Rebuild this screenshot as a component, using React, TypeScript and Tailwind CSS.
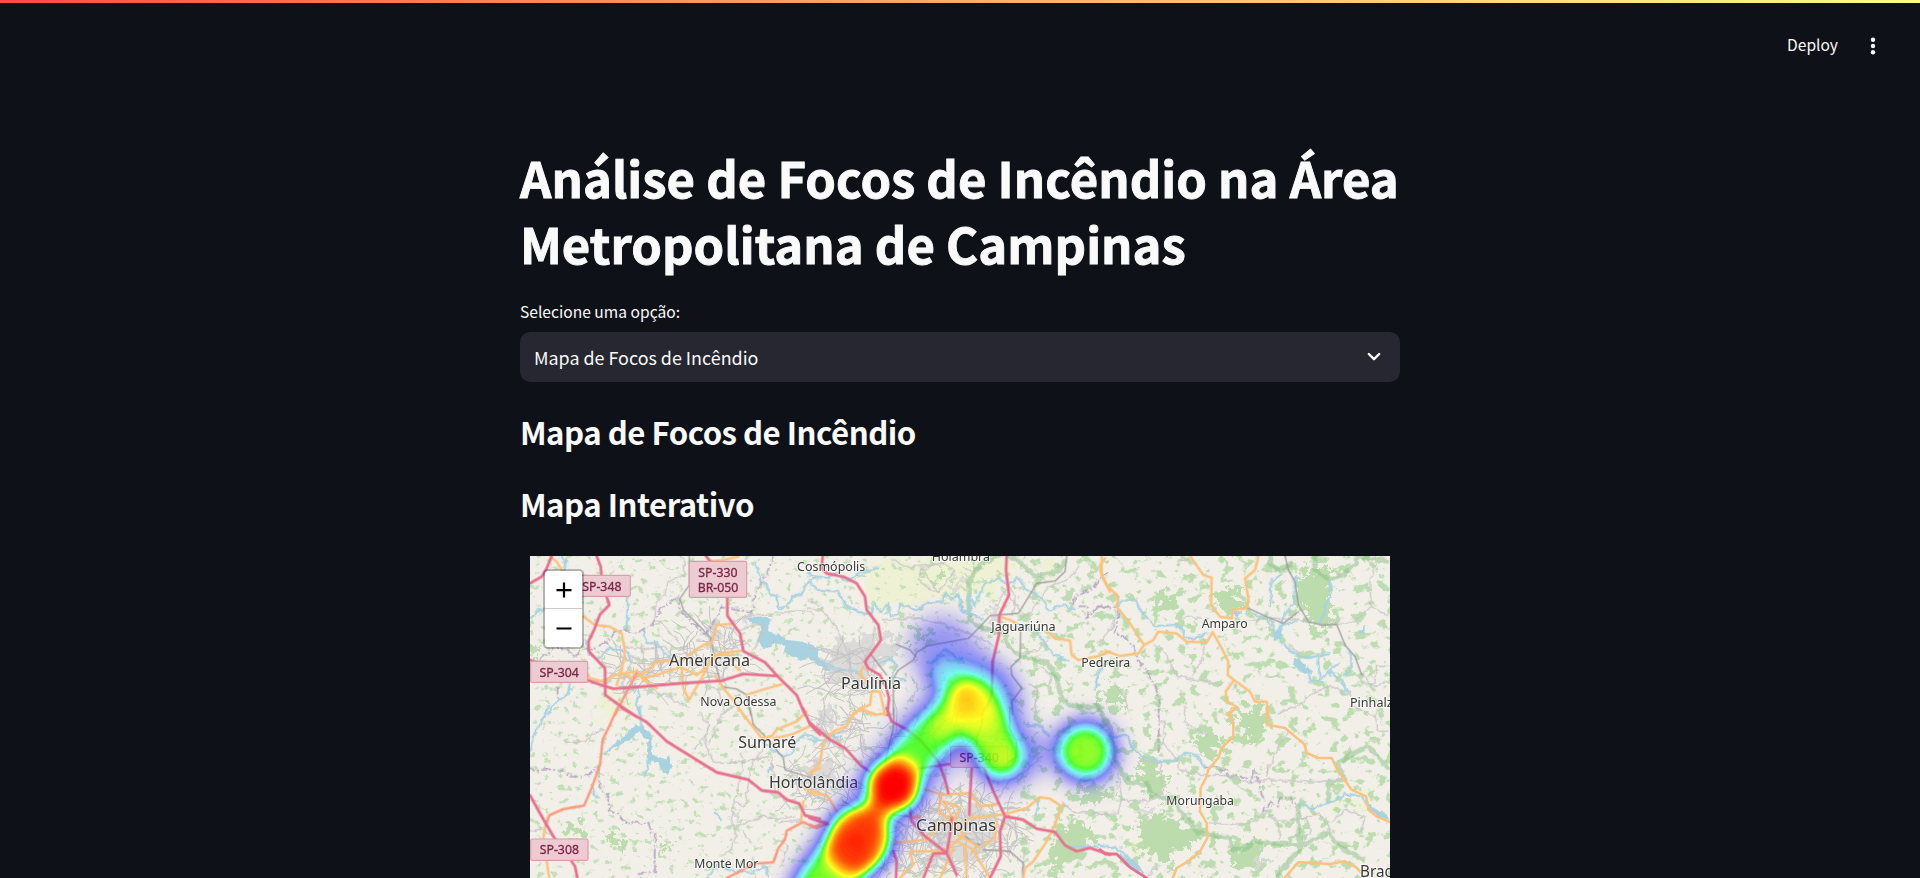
import React from "react";

const UI_FONT = "font-['Source_Sans_Pro','Noto_Sans_CJK_SC','Noto_Sans',sans-serif]";

type Kind = "trunk" | "primary" | "secondary" | "minor" | "rail" | "river" | "border" | "park";

const STYLES: Record<Kind, { stroke: string; width: number; dash?: string; opacity?: number }> = {
  trunk: { stroke: "#e8708e", width: 8.5 },
  primary: { stroke: "#fb9a7c", width: 7.5 },
  secondary: { stroke: "#fac27c", width: 7.5 },
  minor: { stroke: "#c6c2c5", width: 3.5 },
  rail: { stroke: "#9a9a9a", width: 3.8 },
  river: { stroke: "#a6d2e1", width: 6.5 },
  border: { stroke: "#b3a3c0", width: 5, dash: "26 7 6 7" },
  park: { stroke: "#86bd84", width: 14, opacity: 0.5 },
};

interface Tile {
  x: number;
  y: number;
  lines: [Kind, string][];
}

// Map features are kept per tile, three units to one pixel.
const TILES: Tile[] = [
  {
    x: 0,
    y: 0,
    lines: [
      ["river", "M130 33L144 55L135 85"],
      ["river", "M30 230L50 210L80 195L95 150L85 110"],
      ["river", "M325 115L318 145L330 175L325 262"],
      ["river", "M375 262L385 300L415 300L440 330L460 350"],
      ["river", "M200 290L215 335L245 345L275 310L300 320L330 325L335 350"],
      ["river", "M712 60L728 110L745 120L752 150L775 160L780 195L810 185L825 160L850 155L870 110L900 100"],
      ["river", "M155 420L150 450L110 480L90 510"],
      ["river", "M350 420L362 450L355 480L362 510"],
      ["border", "M30 380L90 330L110 310L150 320L170 345L190 310L220 320L260 300L290 265L330 262L345 272L375 262L405 245L425 200L480 160"],
      ["border", "M118 430L120 470M480 160L485 200L520 235L560 275L590 235L610 190L650 200L700 208L712 150L745 95L765 40"],
      ["minor", "M485 35L500 65L498 95L450 115L440 155L415 175L410 225L450 260L485 300"],
      ["minor", "M640 235L700 215L740 214L860 200L890 215"],
      ["minor", "M320 310L380 320L440 310L490 370M370 300L380 380M330 340L420 360L480 340M410 300L430 385"],
      ["minor", "M340 350L310 420L330 480M380 440L440 455L500 490M560 430L600 440L620 510"],
      ["minor", "M590 240L660 260L690 250L735 240L720 300L700 320M610 300L650 290L640 350"],
      ["minor", "M250 330L260 370L310 375M260 390L330 400L350 440L320 450"],
      ["rail", "M508 33L508 120L480 160L490 195L530 235L572 278L580 320L590 370L605 425L650 432L680 450L692 510"],
      ["secondary", "M90 35L110 50L125 75M190 215L225 240L270 245L305 265L315 320L305 375L290 420"],
      ["secondary", "M195 375L210 400L250 410L285 390L345 380L375 400L440 380L485 365L490 430L507 465L550 390L570 350L600 325L665 317"],
      ["secondary", "M300 380L340 400L380 380L410 350L470 345M350 375L370 405L410 430M490 345L520 320L550 300L575 295L590 240L640 236"],
      ["secondary", "M490 370L530 390L555 370L580 330L640 330M585 390L610 430L640 465L670 510M640 360L660 375M680 450L725 435L785 418"],
      ["secondary", "M575 48L610 45L655 35"],
      ["primary", "M350 385L320 440L285 510"],
      ["trunk", "M30 115L65 95L80 70L95 33"],
      ["trunk", "M230 33L242 65L245 100L260 155L268 180L240 208L222 255L205 290L207 320L255 370L256 450L290 475L350 515"],
      ["trunk", "M558 33L590 75L622 100L622 212L660 265L670 318L735 352L772 393L830 450L855 510"],
      ["trunk", "M30 345L90 370L200 405L250 422L280 431L390 423L480 415L605 407L670 387L772 393"],
    ],
  },
  {
    x: 0,
    y: 489,
    lines: [
      ["river", "M90 0L70 50L45 90L35 135"],
      ["river", "M365 0L370 65L330 85L280 125L265 140M370 65L395 85L398 150L430 160L450 195M398 150L380 210"],
      ["river", "M220 240L235 275M590 320L610 340M600 475L570 510M620 490L700 500L740 480L752 510"],
      ["river", "M740 110L760 130L790 150L830 135L825 110L860 85L900 95M750 200L765 180"],
      ["border", "M30 178L50 195L90 190L140 195L160 212L190 212L215 205L240 180L245 240L270 275L275 315L300 325L325 352L390 348L400 380L412 385L410 450L412 510"],
      ["border", "M360 505L412 495"],
      ["minor", "M148 108L200 108L225 80L255 72M570 60L560 110L588 170L680 165L760 150M525 125L555 100L575 60L545 20"],
      ["minor", "M650 0L610 25L590 70L570 110M670 140L672 190L645 300L640 340L655 390L635 430L610 450"],
      ["minor", "M740 120L700 180L690 240L680 300L650 290M760 150L770 250L820 310M650 360L740 330L780 340L830 330M670 370L700 410"],
      ["minor", "M720 250L780 270L850 290M820 200L850 240L900 250M780 350L850 340M790 400L810 420L790 470"],
      ["minor", "M30 375L70 370L120 400"],
      ["rail", "M690 0L700 50L740 90L790 150L795 185L870 208"],
      ["secondary", "M655 0L690 45L725 90L755 85L770 65L830 40L860 10M760 92L820 78L868 55M850 280L843 340M870 195L900 180M850 240L900 255"],
      ["secondary", "M78 340L70 390L80 460L88 510"],
      ["primary", "M292 0L265 60L248 95L240 170L215 240L192 293L130 303L88 322L78 350"],
      ["primary", "M620 510L660 490L700 467L760 463L775 420L795 395L800 368L850 342L880 358L900 350"],
      ["trunk", "M305 0L380 42L440 100L590 193L685 215L725 247L775 253L800 275L838 287L855 322L900 333"],
      ["trunk", "M30 262L65 325L100 385L155 460L165 475L172 510M848 0L870 48L900 80"],
    ],
  },
  {
    x: 870,
    y: 0,
    lines: [
      ["park", "M575 35L520 60L485 110L480 160L485 230L530 258L590 270L600 310L640 340L720 360L745 400L760 470L800 490L880 490M600 35L640 60L680 100L750 85L770 55"],
      ["river", "M0 90L50 105L85 90L120 115L150 90L210 75M0 110L25 140L90 145L110 185L160 210L190 215L200 180L220 210L240 180L245 215L265 215L275 185L330 200L350 180L400 175L410 145L430 170L450 150L460 205L490 210L525 230"],
      ["river", "M490 215L480 150L500 190L530 120L575 105L600 125L630 105L655 140L700 165L720 200L770 185L800 195M620 240L680 260L730 330L780 355M860 440L870 390L890 360"],
      ["river", "M0 330L50 360L100 380L150 385M220 360L250 345L270 370L245 400L290 410M370 360L410 320L460 350"],
      ["minor", "M0 195L40 200L75 235L115 320L130 400M220 230L330 225L400 240L500 280L550 300M0 165L30 190M200 250L190 310L160 360"],
      ["minor", "M340 70L330 110L370 140L390 150L440 80L400 60L340 75L390 150M250 50L290 70L410 60M460 70L500 90"],
      ["minor", "M40 320L120 335L180 320M60 360L110 340M20 400L110 380M125 320L120 380M580 140L620 180L650 215M560 190L600 130L625 160L610 220"],
      ["minor", "M720 290L690 320L640 330M700 370L730 400L720 440M660 420L690 440L680 510M310 400L330 440L300 480M810 70L780 110L720 130L690 180L640 230"],
      ["border", "M795 185L800 155L850 140L870 110L900 90M810 190L840 190L835 225L875 185L900 195"],
      ["rail", "M770 33L765 80L735 108L680 115L650 165L625 205L540 212L510 245L475 280L350 303L320 322L310 345L265 375L250 400L250 510M258 298L300 315L318 335M632 250L630 340L603 365L605 390L635 430L605 470L608 510M180 325L230 390"],
      ["secondary", "M885 40L870 60L875 90L900 140M570 215L600 225L620 235M715 262L735 280L780 287L785 330L805 345L860 335L900 320"],
      ["secondary", "M160 365L147 390L175 410M130 510L150 490L180 480L185 440L210 440L225 510M150 490L195 510"],
      ["trunk", "M38 33L35 70L50 85L100 95L140 115L165 155L170 195L205 240L213 285L165 350L175 370L210 390L228 425L237 460L232 510"],
      ["trunk", "M590 33L588 75L597 150L568 210L567 270L548 350L545 445L540 465L515 510"],
    ],
  },
  {
    x: 870,
    y: 489,
    lines: [
      ["river", "M0 100L50 105L100 90M650 55L700 60L720 90M310 470L300 500M780 425L830 420L870 425M690 280L685 330"],
      ["minor", "M50 0L30 60L60 90L130 70M80 90L110 150L160 170M150 60L170 120L220 150M0 165L70 160L120 200M30 120L100 100"],
      ["minor", "M550 310L600 230L660 190L700 150M590 290L640 290M760 290L800 320L900 320M560 100L600 130M590 330L560 420L520 470M650 430L640 510"],
      ["minor", "M320 100L370 70L430 50L440 0M370 0L380 150M440 70L520 110L600 150"],
      ["rail", "M252 0L250 60L225 165M520 0L515 50L500 90L500 140L530 190M600 0L598 60L620 100L618 150L590 165M100 280L150 310L250 320L330 330M460 380L490 405L510 410M520 425L600 430L640 465L638 510"],
      ["secondary", "M0 195L30 165L40 100L70 70L110 55L130 15L160 5L200 20L235 15M0 255L50 260L80 310M345 245L400 260L480 255L510 295L560 290"],
      ["secondary", "M395 260L385 310L440 350L400 280L450 300L430 340M410 330L465 380L440 400L500 430M400 340L350 395L250 405M440 400L400 430L300 430L310 470L270 510M430 420L390 510M465 420L470 510M490 430L540 510"],
      ["secondary", "M450 350L480 330L580 320L650 300L690 268L720 272L755 295L735 350L710 400L670 460L645 480L640 510M520 410L555 390L560 340M440 380L480 400L510 420"],
      ["primary", "M0 350L20 360L55 345L0 330M330 325L300 330"],
      ["trunk", "M0 45L60 95L105 120L150 170L180 192M230 0L245 40L290 65L330 95L385 160L405 215L415 255M320 182L420 168L520 175L550 250L585 325L640 335L680 362L735 372L765 412L800 430L840 420L900 440"],
      ["trunk", "M485 180L480 265L478 320M540 510L572 445L570 370L585 325M300 300L305 340L345 385L410 435L440 500M410 435L420 380L425 330M410 435L370 437L340 510M0 330L55 350M250 430L260 460L258 510"],
    ],
  },
  {
    x: 1740,
    y: 0,
    lines: [
      ["park", "M518 33L518 65L540 80L580 60M650 40L650 80L690 110L735 95L775 60L775 38L870 55"],
      ["river", "M60 185L75 172L115 172L125 200L160 240L165 250L240 245L260 280L290 290L325 270M545 95L520 115L515 190M590 100L588 180L555 220L545 265L550 300L590 330L630 345L690 330"],
      ["river", "M695 110L697 140L680 200L665 240M470 215L520 230L530 270L555 245L590 235M590 350L600 380L630 390L640 415L665 410L660 345M670 410L720 360M700 385L730 415L750 450M750 325L762 370L740 400M785 270L797 255"],
      ["border", "M0 190L35 198L60 190M63 200L50 270L80 285L110 310L115 350L145 380L180 450L182 510"],
      ["minor", "M240 55L270 45M255 218L310 225M450 232L520 225L600 230L665 240L720 240M720 245L770 230L820 190L870 220M820 190L815 120L835 40"],
      ["minor", "M170 305L200 330L215 360L240 400L320 415L370 425M320 290L315 340L285 400M0 300L45 250L55 200M50 420L80 460L95 510"],
      ["minor", "M790 390L830 430L870 415M785 400L785 420L830 420L835 370L870 370M540 510L600 490L640 450L700 430L760 460M570 300L600 330"],
      ["rail", "M555 33L565 75L585 110L595 180L625 230L665 240L710 238L735 300L765 335L785 390M445 190L500 215L550 235L595 200"],
      ["secondary", "M5 35L5 90L20 120L55 155L50 185L90 235L132 300L115 325L60 333L20 318L0 335M132 300L160 285L175 260L230 265L260 290L320 292L338 262"],
      ["secondary", "M270 33L310 90L335 98L333 180L360 215L395 220L400 195L440 188L445 160L435 100L465 75L475 35M338 262L360 300L385 350L383 390L402 405L450 440L465 470L500 470L505 510M402 405L377 440L380 470L410 485L385 510"],
    ],
  },
  {
    x: 1740,
    y: 489,
    lines: [
      ["park", "M0 0L40 80L50 160L90 230L150 235L160 270L230 275L240 310L300 380L390 395L405 430L440 430L465 405L560 415L620 415L690 380L730 425L795 460M600 300L602 370L600 420M690 285L690 230L740 220L715 175L760 145L810 120L870 185M620 415L585 450L540 508"],
      ["river", "M30 90L90 90L105 125L130 150L180 165L235 162L245 148L270 140L300 150L320 185M690 290L720 280L740 262L790 270L820 310L870 335M0 415L50 425L75 440L110 470L135 500"],
      ["border", "M182 20L182 140M320 185L350 178L370 195L388 185L390 210L435 212L460 225L465 192L480 215L490 265L500 280L495 320L520 290L540 300L545 275L580 275L582 292L605 292"],
      ["river", "M605 292L630 300L640 310L690 290"],
      ["minor", "M180 50L200 45L195 110L240 165L240 190L310 205L380 205L450 230L510 220L660 228L740 215M120 165L190 170L190 260M510 170L505 210L540 120L570 80"],
      ["minor", "M330 350L400 355L460 350L505 315L540 355L545 400M540 345L600 340L660 320L690 350L690 380M700 350L740 310L800 330L790 380M620 330L640 370L610 410M0 320L60 320L70 280L120 285L200 275M260 0L260 50L330 90"],
      ["minor", "M830 20L840 75L870 75M760 0L830 30M180 470L150 510M0 110L60 200L70 270"],
      ["secondary", "M410 0L385 15L400 45L400 85L365 120L355 150L325 185L318 210L302 240L300 310L320 345L322 390L300 430L265 460L230 480L218 510"],
      ["secondary", "M500 0L502 50L555 60L615 110L620 135L655 150L695 150L715 190L755 245L798 265L805 305L830 325L870 342M555 508L595 463L690 468L735 460L765 475L785 495"],
      ["trunk", "M0 425L15 438L50 438L90 478L140 510"],
    ],
  },
];

const NATURAL: Kind[] = ["park", "river", "border", "minor"];
const ROADS: Kind[] = ["rail", "secondary", "primary", "trunk"];

function MapLine({ kind, d }: { kind: Kind; d: string }) {
  const s = STYLES[kind];
  return (
    <path
      d={d}
      fill="none"
      stroke={s.stroke}
      strokeWidth={s.width}
      strokeDasharray={s.dash}
      opacity={s.opacity}
      strokeLinejoin="round"
      strokeLinecap={s.dash ? "butt" : "round"}
    />
  );
}

function LineLayer({ kinds }: { kinds: Kind[] }) {
  return (
    <>
      {TILES.map((tile) => (
        <g key={`${tile.x}-${tile.y}`} transform={`translate(${tile.x} ${tile.y})`}>
          {tile.lines
            .filter(([kind]) => kinds.includes(kind))
            .map(([kind, d], i) => (
              <MapLine key={i} kind={kind} d={d} />
            ))}
        </g>
      ))}
    </>
  );
}

// Deterministic street grid scattered around a town centre.
function streets(cx: number, cy: number, rx: number, ry: number, count: number, seed: number) {
  let s = seed;
  const rnd = () => {
    s = (s * 16807) % 2147483647;
    return s / 2147483647;
  };
  let d = "";
  for (let i = 0; i < count; i++) {
    const a = rnd() * Math.PI * 2;
    const r = Math.sqrt(rnd());
    let x = cx + Math.cos(a) * r * rx;
    let y = cy + Math.sin(a) * r * ry;
    let dir = rnd() * Math.PI * 2;
    d += `M${x.toFixed(0)} ${y.toFixed(0)}`;
    for (let k = 0; k < 3; k++) {
      const len = 12 + rnd() * 24;
      x += Math.cos(dir) * len;
      y += Math.sin(dir) * len;
      dir += (rnd() - 0.5) * 1.6;
      d += `L${x.toFixed(0)} ${y.toFixed(0)}`;
    }
  }
  return d;
}

const STREETS =
  streets(1330, 870, 170, 130, 150, 7) +
  streets(1170, 920, 110, 80, 50, 11) +
  streets(560, 330, 120, 80, 60, 23) +
  streets(350, 385, 90, 50, 35, 31) +
  streets(980, 390, 90, 80, 45, 5) +
  streets(890, 720, 110, 80, 45, 77) +
  streets(1010, 560, 120, 60, 35, 91) +
  streets(1300, 560, 140, 70, 25, 45);

interface Label {
  t: string;
  x: number;
  y: number;
  w: number;
  s: number;
}

const LABELS: Label[] = [
  { t: "Cosmópolis", x: 831, y: 79, w: 205, s: 37 },
  { t: "Holambra", x: 1235, y: 47, w: 175, s: 37 },
  { t: "Americana", x: 447, y: 364, w: 243, s: 46 },
  { t: "Nova Odessa", x: 541, y: 484, w: 228, s: 37 },
  { t: "Sumaré", x: 655, y: 609, w: 174, s: 46 },
  { t: "Hortolândia", x: 747, y: 728, w: 268, s: 46 },
  { t: "Monte Mor", x: 523, y: 970, w: 192, s: 37 },
  { t: "Paulínia", x: 963, y: 433, w: 180, s: 46 },
  { t: "Jaguariúna", x: 1414, y: 258, w: 193, s: 37 },
  { t: "Pedreira", x: 1684, y: 367, w: 147, s: 37 },
  { t: "Amparo", x: 2045, y: 249, w: 138, s: 38 },
  { t: "Pinhalzinho", x: 2490, y: 487, w: 207, s: 37 },
  { t: "Morungaba", x: 1939, y: 779, w: 203, s: 37 },
  { t: "Campinas", x: 1188, y: 859, w: 241, s: 46 },
  { t: "Bragança", x: 2520, y: 995, w: 203, s: 46 },
];

function Shield({ x, y, w, h, lines }: { x: number; y: number; w: number; h: number; lines: string[] }) {
  return (
    <g>
      <rect x={x} y={y} width={w} height={h} rx={5} fill="#ecccd2" stroke="#dc9daa" strokeWidth={3.5} />
      {lines.map((t, i) => (
        <text
          key={t}
          x={x + w / 2}
          y={y + h / 2 + 14 + (i - (lines.length - 1) / 2) * 45}
          textAnchor="middle"
          textLength={t.startsWith("BR") ? 122 : 118}
          lengthAdjust="spacingAndGlyphs"
          fontSize={39}
          fill="#7b2549"
          stroke="#7b2549"
          strokeWidth={0.9}
        >
          {t}
        </text>
      ))}
    </g>
  );
}

function FireMap() {
  return (
    <svg viewBox="30 33 2580 966" className="block h-[322px] w-[860px] font-['Noto_Sans',sans-serif]">
      <defs>
        <filter id="woods" x="0" y="0" width="100%" height="100%" colorInterpolationFilters="sRGB">
          <feTurbulence type="fractalNoise" baseFrequency="0.03 0.035" numOctaves={4} seed={8} />
          <feColorMatrix values="0 0 0 0 0.74  0 0 0 0 0.865  0 0 0 0 0.69  0 10 0 0 -5.6" />
        </filter>
        <filter id="scrub" x="0" y="0" width="100%" height="100%" colorInterpolationFilters="sRGB">
          <feTurbulence type="fractalNoise" baseFrequency="0.045 0.05" numOctaves={4} seed={3} />
          <feColorMatrix values="0 0 0 0 0.77  0 0 0 0 0.875  0 0 0 0 0.72  0 8 0 0 -4.85" />
        </filter>
        <filter id="rough" x="-10%" y="-10%" width="120%" height="120%">
          <feTurbulence type="fractalNoise" baseFrequency="0.035" numOctaves={4} seed={4} result="n" />
          <feDisplacementMap in="SourceGraphic" in2="n" scale={110} xChannelSelector="R" yChannelSelector="G" />
        </filter>
        <filter id="wobble" filterUnits="userSpaceOnUse" x="0" y="0" width="2640" height="1020">
          <feTurbulence type="fractalNoise" baseFrequency="0.05" numOctaves={2} seed={9} result="n" />
          <feDisplacementMap
            in="SourceGraphic"
            in2="n"
            scale={24}
            xChannelSelector="R"
            yChannelSelector="G"
            colorInterpolationFilters="sRGB"
          />
        </filter>
        <filter id="soft" filterUnits="userSpaceOnUse" x="600" y="150" width="1400" height="1050">
          <feGaussianBlur stdDeviation={23} />
        </filter>
        <filter id="wide" filterUnits="userSpaceOnUse" x="600" y="150" width="1400" height="1050">
          <feGaussianBlur stdDeviation={34} />
        </filter>
        <filter
          id="heat"
          filterUnits="userSpaceOnUse"
          x="600"
          y="150"
          width="1400"
          height="1050"
          colorInterpolationFilters="sRGB"
        >
          <feColorMatrix values="0 0 0 1 0  0 0 0 1 0  0 0 0 1 0  0 0 0 1 0" />
          <feComponentTransfer>
            <feFuncR type="table" tableValues="0.25 0.25 0.2 0.1 0 0.2 0.25 0.2 1 1 1" />
            <feFuncG type="table" tableValues="0.2 0.2 0.15 0.1 0.15 0.65 1 1 1 0.5 0" />
            <feFuncB type="table" tableValues="1 1 1 1 1 1 0.95 0.05 0.05 0 0" />
            <feFuncA type="table" tableValues="0 0.16 0.3 0.4 0.5 0.58 0.7 0.84 0.9 0.95 1" />
          </feComponentTransfer>
        </filter>
      </defs>

      <rect x="30" y="33" width="2580" height="966" fill="#f2efe9" />
      <g fill="#eff1d5" filter="url(#rough)">
        <path d="M1040 40L1500 35L1420 150L1230 170L1030 190Z" />
        <path d="M230 440L330 450L350 500L240 520ZM2430 770L2560 740L2530 810ZM1820 890L1890 880L1870 940ZM1560 35L1620 35L1610 80L1550 80Z" />
      </g>
      <rect x="30" y="33" width="1500" height="966" filter="url(#scrub)" />
      <rect x="1500" y="33" width="1110" height="966" filter="url(#woods)" />
      <g fill="#bcdcae" filter="url(#rough)">
        <path d="M1900 160L1990 140L1960 190L1890 200ZM2070 140L2150 135L2180 190L2110 200ZM2330 90L2430 60L2430 230L2370 240L2330 180Z" />
        <path d="M2130 490L2230 480L2240 540L2180 610L2160 560ZM2030 570L2110 565L2110 620L2050 640ZM1850 650L1920 660L1920 700L1960 740L1880 750Z" />
        <path d="M1900 800L2040 850L2040 900L1980 900L1950 960L1890 920L1860 850ZM2130 900L2230 900L2240 960L2140 970ZM1750 430L1800 420L1800 480L1750 490Z" />
        <path d="M1620 850L1700 810L1720 870L1680 950L1600 980L1580 920ZM1700 720L1770 740L1750 770L1680 770ZM130 830L190 840L180 890L130 870ZM260 870L320 880L300 930Z" />
        <path d="M1180 250L1240 260L1220 290L1170 280ZM1230 90L1260 90L1255 110L1230 110ZM30 310L60 310L60 340L30 340ZM410 900L450 900L440 940Z" />
      </g>
      <g fill="#d9d8d8" filter="url(#rough)" opacity="0.85">
        <path d="M910 320L1010 270L1130 280L1130 330L1070 360L1040 420L930 410Z" />
        <path d="M560 230L600 240L610 280L540 290ZM650 210L690 210L680 230L650 225ZM640 800L670 800L660 830L640 820ZM1290 100L1350 100L1350 130L1300 130Z" />
        <path d="M1390 190L1450 190L1450 220L1390 220ZM1850 790L1890 780L1890 810L1850 810ZM1240 850L1360 770L1440 830L1380 950L1240 960ZM860 640L930 650L950 720L860 740Z" />
        <path d="M900 500L940 500L950 540L890 550ZM1080 600L1120 590L1120 620L1080 620ZM2200 930L2250 930L2240 960L2200 950ZM1450 820L1480 820L1480 850L1450 850Z" />
      </g>
      <g fill="#a9d2e0" filter="url(#wobble)">
        <path d="M690 222L745 220L758 232L750 265L785 275L800 290L860 297L900 315L900 355L870 345L845 352L800 330L805 310L770 300L735 318L720 290L730 250L700 240Z" />
        <path d="M870 295L885 310L880 335L925 365L940 380L925 382L890 358L870 350Z" />
        <path d="M355 545L375 550L395 575L402 635L430 645L442 650L453 640L462 670L450 700L437 690L420 658L395 650L385 660L388 610L382 580L365 565L300 610L270 625L290 600Z" />
        <path d="M2330 350L2345 345L2365 372L2385 385L2380 395L2350 380L2325 365ZM2265 270L2290 255L2290 285L2270 295ZM2525 265L2538 245L2540 270L2525 272ZM2150 205L2170 205L2160 222L2145 215Z" />
        <path d="M1800 930L1840 950L1870 980L1860 990L1830 975ZM2540 770L2570 800L2610 820L2610 830L2570 815Z" />
      </g>

      <path d={STREETS} fill="none" stroke="#c6c4c6" strokeWidth={3} strokeLinejoin="round" />
      <g filter="url(#wobble)">
        <LineLayer kinds={NATURAL} />
      </g>
      <LineLayer kinds={ROADS} />

      <g fill="#363636" stroke="#ffffff" strokeOpacity={0.65} strokeWidth={6} strokeLinejoin="round" paintOrder="stroke">
        {LABELS.map((l) => (
          <text key={l.t} x={l.x} y={l.y} fontSize={l.s} textLength={l.w} lengthAdjust="spacingAndGlyphs">
            {l.t}
          </text>
        ))}
      </g>

      <Shield x={160} y={91} w={171} h={63} lines={["SP-348"]} />
      <Shield x={508} y={49} w={172} h={108} lines={["SP-330", "BR-050"]} />
      <Shield x={32} y={349} w={171} h={63} lines={["SP-304"]} />
      <Shield x={32} y={882} w={172} h={64} lines={["SP-308"]} />
      <Shield x={1292} y={604} w={171} h={63} lines={["SP-340"]} />

      <g filter="url(#heat)">
        <g filter="url(#wide)" stroke="#000" fill="none" strokeLinecap="round" strokeLinejoin="round">
          <path d="M1265 310L1310 380L1400 460L1450 640" strokeWidth={190} opacity={0.32} />
          <path d="M900 1050L1010 890L1120 720L1250 560L1380 450" strokeWidth={215} opacity={0.28} />
          <path d="M1460 640L1560 620" strokeWidth={110} opacity={0.22} />
          <circle cx={1696} cy={619} r={108} fill="#000" stroke="none" opacity={0.28} />
        </g>
        <g filter="url(#soft)" stroke="#000" fill="none" strokeLinecap="round" strokeLinejoin="round">
          <path d="M1275 385L1310 410" strokeWidth={100} opacity={0.3} />
          <path d="M1165 650L1200 605L1270 540L1360 468L1400 540L1438 632" strokeWidth={142} opacity={0.59} />
          <path d="M1255 550L1350 478" strokeWidth={64} opacity={0.27} />
          <path d="M1030 860L1100 750" strokeWidth={105} opacity={0.55} />
          <path d="M905 1030L975 940" strokeWidth={175} opacity={0.62} />
          <circle cx={1120} cy={723} r={84} fill="#000" stroke="none" />
          <ellipse cx={1016} cy={885} rx={99} ry={108} transform="rotate(24 1016 885)" fill="#000" stroke="none" opacity={0.87} />
          <circle cx={1696} cy={619} r={86} fill="#000" stroke="none" opacity={0.64} />
        </g>
      </g>
    </svg>
  );
}

function ZoomControl() {
  return (
    <div className="absolute left-[13px] top-[13px] flex w-[41px] flex-col overflow-hidden rounded-[5px] border-2 border-black/25 bg-white bg-clip-padding">
      <button aria-label="Zoom in" className="flex h-[38px] items-center justify-center border-b border-[#ccc]">
        <svg viewBox="0 0 16 16" className="size-4 fill-black">
          <path d="M0.5 7h15v2.2h-15zM6.9 0.5h2.2v15h-2.2z" />
        </svg>
      </button>
      <button aria-label="Zoom out" className="flex h-[38px] items-center justify-center">
        <svg viewBox="0 0 16 16" className="size-4 fill-black">
          <path d="M0.5 7.5h15v2.1h-15z" />
        </svg>
      </button>
    </div>
  );
}

export default function App() {
  return (
    <div className={`flex h-screen flex-col overflow-hidden bg-[#0e1117] text-[#fafafa] ${UI_FONT}`}>
      <div className="h-[3px] shrink-0 bg-linear-to-r from-[#ff4b4b] to-[#fffd80]" />
      <header className="flex h-[85px] shrink-0 items-center justify-end gap-[30px] pr-[42px]">
        <button className="pb-[3px] text-[15.6px] leading-7">Deploy</button>
        <svg viewBox="0 0 10 20" className="h-5 w-2.5 fill-[#fafafa]">
          <circle cx="5" cy="3.8" r="2.2" />
          <circle cx="5" cy="10" r="2.2" />
          <circle cx="5" cy="16.2" r="2.2" />
        </svg>
      </header>
      <main className="mx-auto flex w-[880px] flex-col pt-14">
        <h1 className="whitespace-nowrap text-[49px] font-bold leading-[66px] tracking-[0.04px] [-webkit-text-stroke:0.9px_#fafafa]">
          Análise de Focos de Incêndio na Área
          <br />
          Metropolitana de Campinas
        </h1>
        <label className="mt-[21px] text-[15.6px] leading-7">Selecione uma opção:</label>
        <div className="mt-[7px] flex h-[50px] items-center justify-between rounded-[10px] bg-[#262730] pl-[14px] pr-[19px]">
          <span className="text-[17.9px] leading-7">Mapa de Focos de Incêndio</span>
          <svg viewBox="0 0 14 10" className="h-2.5 w-3.5" fill="none" stroke="#fafafa" strokeWidth="2.4" strokeLinecap="round" strokeLinejoin="round">
            <path d="M1.8 2L7 7.2L12.2 2" />
          </svg>
        </div>
        <h2 className="mt-[29px] text-[31.2px] font-semibold leading-[42px] tracking-[-0.5px]">Mapa de Focos de Incêndio</h2>
        <h2 className="mt-[30px] text-[31.2px] font-semibold leading-[42px] tracking-[-0.5px]">Mapa Interativo</h2>
        <div className="relative mx-[10px] mt-[31px]">
          <FireMap />
          <ZoomControl />
        </div>
      </main>
    </div>
  );
}
